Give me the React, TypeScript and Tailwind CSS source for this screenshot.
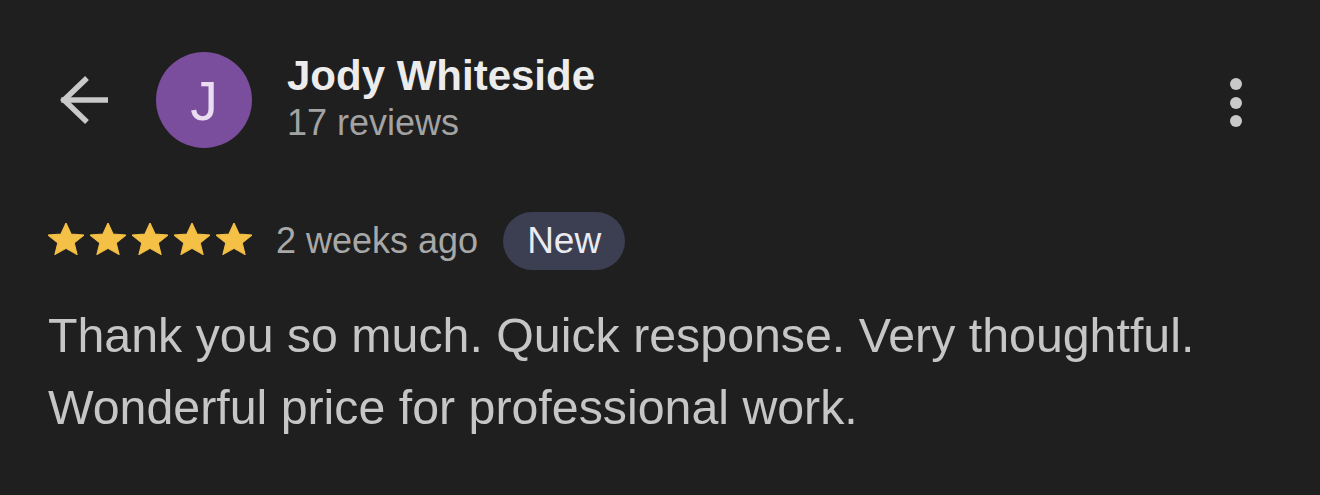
import { FC } from "react";

const Star: FC = () => (
    <svg width="36" height="32" viewBox="2 2 20 19.27" preserveAspectRatio="none" className="flex-shrink-0">
        <path
            d="M12 17.27L18.18 21l-1.64-7.03L22 9.24l-7.19-.61L12 2 9.19 8.63 2 9.24l5.46 4.73L5.82 21z"
            fill="#f4c045"
            stroke="#f4c045"
            strokeWidth="0.6"
            strokeLinejoin="round"
        />
    </svg>
);

const BackArrow: FC = () => (
    <svg width="48" height="48" viewBox="0 0 48 48" fill="none" stroke="#c9c9c9" strokeWidth="5.5" strokeLinecap="square">
        <path d="M4 24H46" />
        <path d="M25 4L4 24L25 44" strokeLinejoin="miter" />
    </svg>
);

const App: FC = () => (
    <div
        className="w-[1320px] h-[495px] bg-[#1f1f1f] overflow-hidden"
        style={{ fontFamily: '"Liberation Sans", Arial, sans-serif' }}
    >
        <div className="flex items-start pt-[52px] pl-[60px] pr-[78px]">
            <div className="mt-[24px]">
                <BackArrow />
            </div>
            <div className="ml-[48px] w-[96px] h-[96px] rounded-full bg-[#7a4e9d] flex items-center justify-center flex-shrink-0">
                <span className="text-[55px] leading-none text-[#eadcf1] pt-[2px]">J</span>
            </div>
            <div className="ml-[35px] flex-1">
                <p className="text-[42px] leading-[48px] font-bold text-[#ececec]">Jody Whiteside</p>
                <p className="mt-[3px] text-[36px] leading-[40px] text-[#a3a3a3]">17 reviews</p>
            </div>
            <div className="mt-[26px] flex flex-col items-center gap-[6.5px]">
                <span className="w-[12px] h-[12px] rounded-full bg-[#c9c9c9]" />
                <span className="w-[12px] h-[12px] rounded-full bg-[#c9c9c9]" />
                <span className="w-[12px] h-[12px] rounded-full bg-[#c9c9c9]" />
            </div>
        </div>

        <div className="flex items-center pl-[48px] mt-[64px]">
            <div className="flex items-center gap-[6px] mt-[-4px]">
                <Star />
                <Star />
                <Star />
                <Star />
                <Star />
            </div>
            <span className="ml-[24px] text-[36px] leading-[40px] text-[#a8a8a8]">2 weeks ago</span>
            <span className="ml-[25px] h-[58px] px-[24px] rounded-full bg-[#3c3e51] text-[37px] leading-[58px] text-[#ebebf2]">
                New
            </span>
        </div>

        <p className="pl-[48px] pr-[40px] mt-[29px] text-[48.3px] leading-[72px] text-[#c6c6c6]">
            Thank you so much. Quick response. Very thoughtful.
            <br />
            Wonderful price for professional work.
        </p>
    </div>
);

export default App;
